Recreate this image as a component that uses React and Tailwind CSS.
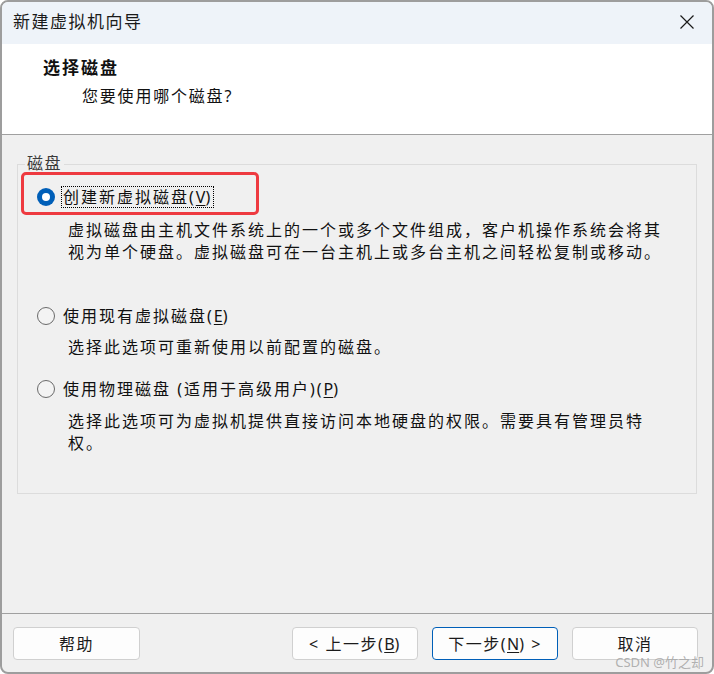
import React from 'react';

function Radio({ checked }) {
  if (checked) {
    return (
      <span className="w-[18px] h-[18px] rounded-full bg-[#005fb8] flex items-center justify-center shrink-0">
        <span className="w-[8px] h-[8px] rounded-full bg-white" />
      </span>
    );
  }
  return <span className="w-[18px] h-[18px] rounded-full border border-[#6a6a6a] bg-[#f3f3f3] shrink-0" />;
}

function Btn({ children, primary, wide }) {
  return (
    <button
      className={`h-[33px] ${wide ? 'w-[127px]' : 'w-[126px]'} rounded-[4px] bg-[#fdfdfd] border text-[16px] leading-[20px] text-[#1b1b1b] tracking-[1.5px] flex items-center justify-center ${primary ? 'border-[#005fb8]' : 'border-[#d0d0d0]'}`}
    >
      {children}
    </button>
  );
}

export default function App() {
  return (
    <div className="w-[714px] h-[674px] bg-white font-['Noto_Sans','Noto_Sans_CJK_SC',sans-serif] text-[#111]">
      <div className="relative w-full h-full border-2 border-[#9d9d9d] rounded-[8px] overflow-hidden flex flex-col bg-[#f0f0f0]">
        {/* TITLE BAR */}
        <div className="h-[42px] bg-[#eef3f9] flex items-center justify-between pl-[11px] pr-[17px] shrink-0">
          <span className="text-[17px] leading-[20px] tracking-[1.5px] text-[#1a1a1a] mt-[-2px]">新建虚拟机向导</span>
          <svg width="16" height="16" viewBox="0 0 16 16" className="mt-[-2px]">
            <path d="M1.5 1.5 L14.5 14.5 M14.5 1.5 L1.5 14.5" stroke="#1a1a1a" strokeWidth="1.2" fill="none" />
          </svg>
        </div>

        {/* HEADER */}
        <div className="h-[90px] bg-white pt-[14px] pl-[41px] shrink-0">
          <div className="text-[17px] leading-[20px] font-bold tracking-[2px]">选择磁盘</div>
          <div className="mt-[8px] pl-[39px] text-[16px] leading-[20px] tracking-[1.8px]">您要使用哪个磁盘?</div>
        </div>
        <div className="h-px bg-[#a0a0a0] shrink-0" />

        {/* CONTENT */}
        <div className="h-[478px] pt-[29px] pl-[15px] shrink-0">
          <div className="relative w-[680px] h-[330px] border border-[#dcdcdc] pt-[21px] pl-[19px]">
            <span className="absolute left-[7px] top-[-12px] px-[2px] bg-[#f0f0f0] text-[16px] leading-[20px] tracking-[1.5px] text-[#3a3a3a]">磁盘</span>

            {/* red annotation */}
            <div className="absolute left-[3px] top-[7px] w-[238px] h-[43px] border-[3px] border-[#ee3a40] rounded-[5px]" />

            <div className="flex items-center h-[22px] gap-[6px]">
              <Radio checked />
              <span className="border border-dotted border-black px-[1px] leading-[20px] text-[16px] tracking-[2px]">
                创建新虚拟磁盘(<span className="underline underline-offset-2 tracking-normal">V</span>)
              </span>
            </div>
            <div className="mt-[11px] ml-[31px] text-[16px] leading-[22px] tracking-[2px]">
              虚拟磁盘由主机文件系统上的一个或多个文件组成，客户机操作系统会将其<br />
              视为单个硬盘。虚拟磁盘可在一台主机上或多台主机之间轻松复制或移动。
            </div>

            <div className="flex items-center h-[22px] gap-[6px] mt-[42px]">
              <Radio />
              <span className="border border-transparent px-[1px] leading-[20px] text-[16px] tracking-[2px]">
                使用现有虚拟磁盘(<span className="underline underline-offset-2 tracking-normal">E</span>)
              </span>
            </div>
            <div className="mt-[9px] ml-[31px] text-[16px] leading-[22px] tracking-[2px]">
              选择此选项可重新使用以前配置的磁盘。
            </div>

            <div className="flex items-center h-[22px] gap-[6px] mt-[20px]">
              <Radio />
              <span className="border border-transparent px-[1px] leading-[20px] text-[16px] tracking-[2px]">
                使用物理磁盘 (适用于高级用户)(<span className="underline underline-offset-2 tracking-normal">P</span>)
              </span>
            </div>
            <div className="mt-[10px] ml-[31px] text-[16px] leading-[22px] tracking-[2px]">
              选择此选项可为虚拟机提供直接访问本地硬盘的权限。需要具有管理员特<br />
              权。
            </div>
          </div>
        </div>
        <div className="h-px bg-[#a0a0a0] shrink-0" />

        {/* FOOTER */}
        <div className="flex-1 flex justify-between pt-[13px] pl-[11px] pr-[14px]">
          <Btn wide>帮助</Btn>
          <div className="flex gap-[14px]">
            <Btn>&lt; 上一步(<span className="underline underline-offset-2 tracking-normal">B</span>)</Btn>
            <Btn primary>下一步(<span className="underline underline-offset-2 tracking-normal">N</span>) &gt;</Btn>
            <Btn>取消</Btn>
          </div>
        </div>

        <span className="absolute right-[8px] bottom-[2px] text-[13px] leading-[16px] text-[#a8a8a8]/90">CSDN @竹之却</span>
      </div>
    </div>
  );
}
